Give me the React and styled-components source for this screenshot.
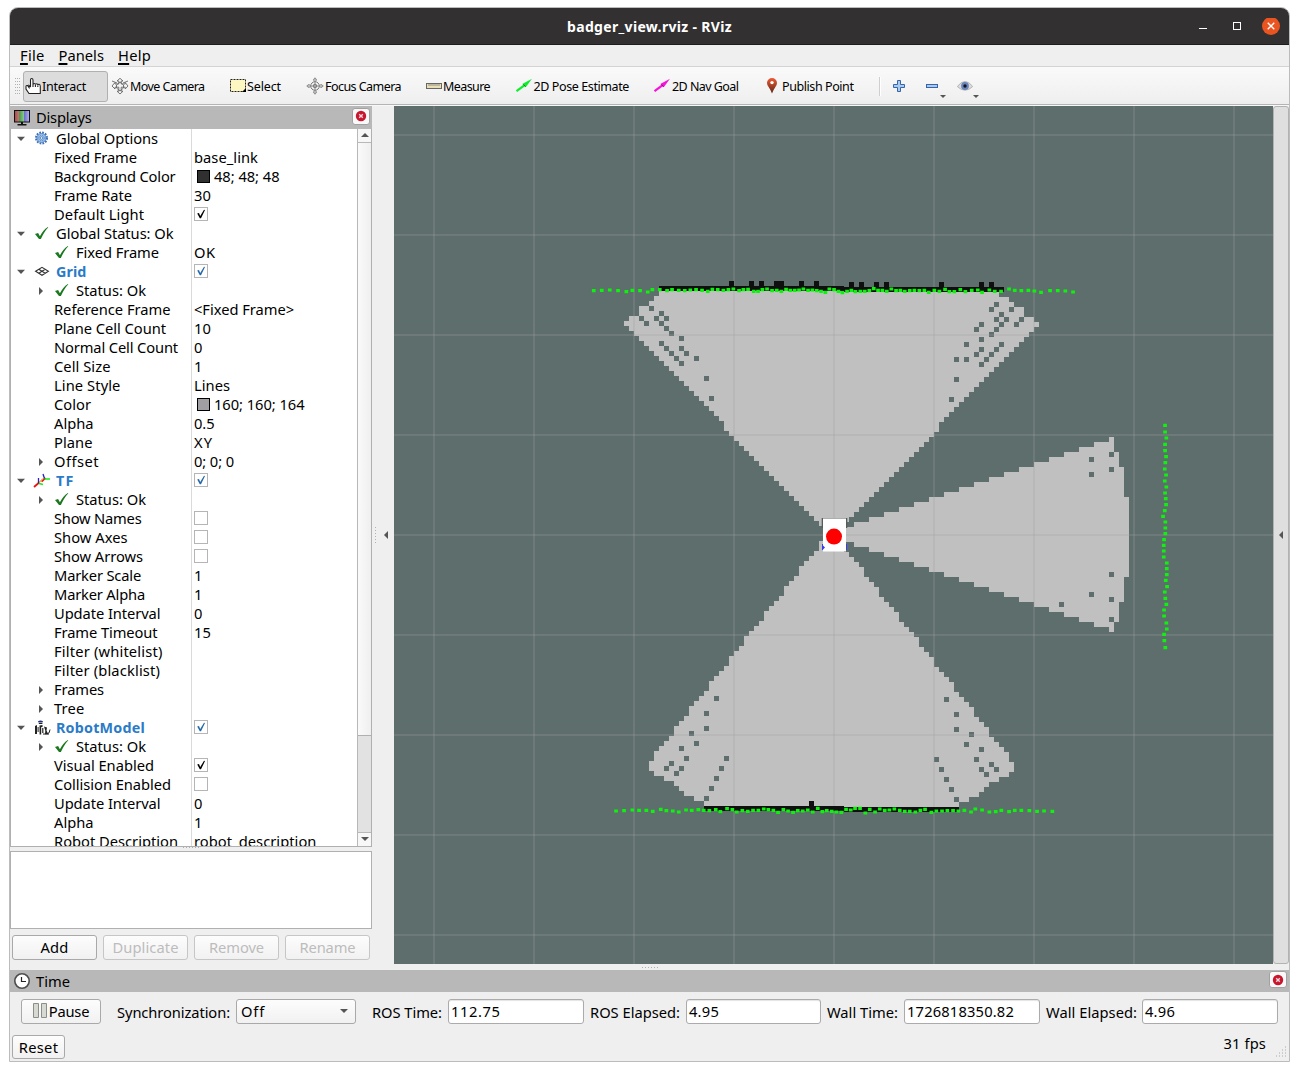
import React, { useLayoutEffect, useRef, useState } from "react";
import styled, { createGlobalStyle, css } from "styled-components";

const GlobalStyle = createGlobalStyle`
  * { box-sizing: border-box; }
  body { margin: 0; background: #fff; }
`;

const FONT = '"Noto Sans", "Open Sans", sans-serif';

/* ---------- text with a fixed advance width ---------- */

const LabelText = styled.span`
  flex: none;
  white-space: pre;
  display: inline-block;
`;

function Label({ w, children, className }) {
  const ref = useRef(null);
  const [spacing, setSpacing] = useState(0);
  useLayoutEffect(() => {
    const el = ref.current;
    const n = el.textContent.length;
    const natural = el.getBoundingClientRect().width - spacing * n;
    setSpacing((w - natural) / n);
  }, [w]);
  return (
    <LabelText ref={ref} className={className} style={{ letterSpacing: spacing }}>
      {children}
    </LabelText>
  );
}

/* ---------- window frame ---------- */

const Desktop = styled.div`
  width: 1299px;
  height: 1071px;
  padding: 7px 9px 9px;
  background: #fff;
  overflow: hidden;
`;

const Window = styled.div`
  width: 1281px;
  height: 1055px;
  border: 1px solid #bcbcbc;
  border-radius: 9px 9px 0 0;
  background: #efefef;
  display: flex;
  flex-direction: column;
  overflow: hidden;
  font-family: ${FONT};
  font-size: 14.7px;
  color: #000;
`;

const TitleBar = styled.header`
  height: 37px;
  flex: none;
  display: grid;
  grid-template-columns: 1fr auto 1fr;
  align-items: center;
  background: #323031;
  border-bottom: 1px solid #1e1d1d;
  color: #fff;
  font-weight: 700;
  font-size: 14px;
`;

const WindowButtons = styled.div`
  justify-self: end;
  display: flex;
  align-items: center;
  padding: 4px 9px 0 0;
`;

const MenuBar = styled.nav`
  height: 22px;
  flex: none;
  display: flex;
  align-items: flex-start;
  gap: 14px;
  padding-left: 10px;
  border-bottom: 1px solid #d3d3d3;
  line-height: 20px;
`;

const Mnemonic = styled.span`
  text-decoration: underline;
  text-decoration-thickness: 1.5px;
  text-underline-offset: 2px;
`;

const ToolBar = styled.div`
  height: 39px;
  flex: none;
  display: flex;
  align-items: center;
  padding-left: 5px;
  background: linear-gradient(#fafafa, #eeeeee);
  border-bottom: 1px solid #f8f8f8;
  box-shadow: inset 0 -1px 0 #b4b4b4;
  font-size: 12.5px;
`;

const Tool = styled.div`
  width: ${(p) => p.$width}px;
  height: 31px;
  flex: none;
  display: flex;
  align-items: center;
  gap: ${(p) => p.$gap}px;
  padding-left: ${(p) => (p.$active ? 1 : 2)}px;
  border: 1px solid transparent;
  ${(p) =>
    p.$active &&
    css`
      background: #dcdcdc;
      border-color: #b0b0b0;
      border-radius: 3px;
      margin-right: 1px;
    `}
`;

const ToolIcon = styled.svg`
  width: 16px;
  height: 16px;
  flex: none;
  overflow: visible;
`;

const Separator = styled.div`
  width: 2px;
  height: 19px;
  margin-right: 12px;
  border-left: 1px solid #cfcfcf;
  border-right: 1px solid #fff;
`;

const MiniTool = styled.div`
  width: ${(p) => p.$width || 33}px;
  height: 30px;
  display: flex;
  align-items: center;
`;

const DropArrow = styled.span`
  width: 0;
  align-self: flex-end;
  margin: 0 0 3px ${(p) => p.$offset}px;
  border: 3px solid transparent;
  border-top-color: #555;
  border-bottom: 0;
`;

/* ---------- workspace ---------- */

const Workspace = styled.main`
  height: 858px;
  flex: none;
  display: flex;
`;

const Dock = styled.aside`
  width: 362px;
  flex: none;
  display: flex;
  flex-direction: column;
`;

const DockHeader = styled.div`
  height: ${(p) => p.$height}px;
  flex: none;
  display: flex;
  align-items: center;
  background: #b8b8b8;
  padding: 0 2px 0 4px;
  gap: 6px;
  line-height: 20px;
`;

const DockTitle = styled.div`
  height: 22px;
`;

const DockIcon = styled.svg`
  width: 16px;
  height: 16px;
  flex: none;
  overflow: visible;
`;

const CloseBox = styled.div`
  width: 18px;
  height: 17px;
  margin: 0 0 3px auto;
  display: flex;
  align-items: center;
  justify-content: center;
  background: #f9f9f9;
  border: 1px solid #a2a2a2;
  border-radius: 3px;
`;

const TreeFrame = styled.div`
  height: 718px;
  flex: none;
  display: flex;
  background: #fff;
  border: 1px solid #b0b0b0;
  border-top: 0;
`;

const TreeBody = styled.div`
  width: 346px;
  height: 717px;
  overflow: hidden;
`;

const TreeRow = styled.div`
  height: 19px;
  display: flex;
  line-height: 19px;
`;

const NameCell = styled.div`
  width: 181px;
  height: 19px;
  flex: none;
  display: flex;
  align-items: center;
  border-right: 1px solid #dadada;
  padding-left: ${(p) => 4 + p.$level * 20}px;
  ${(p) =>
    p.$display &&
    css`
      color: #2a7bc8;
      font-weight: 700;
      font-size: 14.300px;
    `}
`;

const ValueCell = styled.div`
  display: flex;
  align-items: center;
  padding-left: 2px;
`;

const Expander = styled.svg`
  width: 12px;
  height: 12px;
  flex: none;
  margin-right: ${(p) => p.$gap}px;
`;

const RowIcon = styled.svg`
  width: 16px;
  height: 16px;
  flex: none;
  overflow: visible;
  margin-right: 5px;
`;

const CheckFrame = styled.div`
  width: 14px;
  height: 14px;
  margin-bottom: 1px;
  display: flex;
  background: #fff;
  border: 1px solid #b5b5b5;
`;

const Swatch = styled.span`
  width: 13px;
  height: 13px;
  margin: 0 4px 0 3px;
  border: 1px solid #000;
  background: ${(p) => p.$color};
`;

const ScrollBar = styled.div`
  width: 14px;
  flex: none;
  display: flex;
  flex-direction: column;
  border-left: 1px solid #b8b8b8;
  background: #e2e2e2;
`;

const ScrollButton = styled.div`
  height: 14px;
  flex: none;
  display: flex;
  align-items: ${(p) => (p.$down ? "center" : "flex-start")};
  padding-top: ${(p) => (p.$down ? 0 : 2)}px;
  padding-bottom: ${(p) => (p.$down ? 2 : 0)}px;
  justify-content: center;
  background: #f7f7f7;
  border-top: ${(p) => (p.$down ? "1px solid #b8b8b8" : "0")};
  border-bottom: ${(p) => (p.$down ? "0" : "1px solid #b8b8b8")};
`;

const ScrollThumb = styled.div`
  height: 593px;
  background: linear-gradient(90deg, #fafafa, #efefef);
  border-bottom: 1px solid #b0b0b0;
`;

const ScrollSpace = styled.div`
  flex: 1;
`;

const Dots = styled.div`
  width: ${(p) => (p.$vertical ? 1 : 16)}px;
  height: ${(p) => (p.$vertical ? 16 : 1)}px;
  flex: none;
  background: repeating-linear-gradient(
    ${(p) => (p.$vertical ? "180deg" : "90deg")},
    #b0b0b0 0 1px,
    transparent 1px 3px
  );
`;

const Grip = styled.div`
  width: 8px;
  display: flex;
  gap: 1px;
`;

const SplitRow = styled.div`
  height: ${(p) => p.$height}px;
  flex: none;
  display: flex;
  align-items: ${(p) => p.$align || "center"};
  justify-content: center;
`;

const Description = styled.div`
  height: 78px;
  flex: none;
  background: #fff;
  border: 1px solid #b0b0b0;
`;

const ButtonRow = styled.div`
  display: flex;
  gap: 6px;
  padding: 6px 2px 0;
`;

const PushButton = styled.button`
  width: ${(p) => p.$width}px;
  height: ${(p) => p.$height || 25}px;
  flex: none;
  display: flex;
  align-items: center;
  justify-content: center;
  gap: 1px;
  padding: 0 0 ${(p) => p.$lift ?? 2}px;
  font: inherit;
  color: ${(p) => (p.disabled ? "#bcbcbc" : "#000")};
  background: linear-gradient(#fdfdfd, #f1f1f1);
  border: 1px solid ${(p) => (p.disabled ? "#c6c6c6" : "#a9a9a9")};
  border-radius: 3px;
`;

const VerticalSplit = styled.div`
  width: 22px;
  flex: none;
  display: flex;
  align-items: center;
  padding-left: 3px;
  gap: 6px;
`;

const SideHandle = styled.div`
  width: 16px;
  flex: none;
  display: flex;
  align-items: center;
  justify-content: center;
  background: #dfdfdf;
  border: 1px solid #b2b2b2;
  border-radius: 3px;
`;

const Viewport = styled.svg`
  width: 879px;
  height: 858px;
  flex: none;
  display: block;
  background: #5e6e6c;
`;

/* ---------- time panel ---------- */

const TimePanel = styled.footer`
  flex: 1;
  display: flex;
  flex-direction: column;
`;

const TimeRow = styled.div`
  height: 25px;
  margin: 7px 0 0 11px;
  display: flex;
`;

const FieldLabel = styled.div`
  width: ${(p) => p.$width}px;
  flex: none;
  padding-left: ${(p) => p.$pad}px;
  line-height: 27px;
`;

const ComboBox = styled.div`
  width: 120px;
  display: flex;
  align-items: center;
  justify-content: space-between;
  padding: 0 7px 2px 4px;
  background: linear-gradient(#fdfdfd, #f1f1f1);
  border: 1px solid #a9a9a9;
  border-radius: 3px;
`;

const Field = styled.div`
  width: ${(p) => p.$width}px;
  flex: none;
  padding-left: 2px;
  line-height: 22px;
  background: #fff;
  border: 1px solid #ababab;
  border-radius: 3px;
  box-shadow: inset 0 1px 1px #e4e4e4;
`;

const StatusRow = styled.div`
  flex: 1;
  display: flex;
  justify-content: space-between;
  padding: 11px 1px 0 2px;
`;

const FrameRate = styled.div`
  display: flex;
  line-height: 16px;
  gap: 8px;
`;

/* ---------- small drawings ---------- */

const Triangle = ({ dir }) => (
  <svg width="8" height="8" viewBox="0 0 8 8" fill="#555">
    {dir === "down" && <path d="M0 2h8L4 6z" />}
    {dir === "up" && <path d="M0 6h8L4 2z" />}
    {dir === "left" && <path d="M6 0v8L2 4z" />}
  </svg>
);

const CloseGlyph = () => (
  <svg width="12" height="12" viewBox="0 0 12 12">
    <circle cx="6" cy="6" r="5.2" fill="#c9162e" />
    <path d="M4.2 4.2l3.6 3.6M7.8 4.2L4.2 7.8" stroke="#f6d5d9" strokeWidth="1.4" />
  </svg>
);

const CheckMark = ({ color }) => (
  <svg width="12" height="12" viewBox="0 0 12 12">
    <path d="M2.2 5.4L4 5l1.2 3L9 1.8l1 .3L6 10.2H4.8z" fill={color} />
  </svg>
);

const rowIcons = {
  gear: (
    <g transform="translate(6.5 7)">
      <circle r="5.5" fill="none" stroke="#3a70b8" strokeWidth="2" strokeDasharray="1.7 1.18" />
      <circle r="4.5" fill="#a9c6ea" stroke="#3f76bd" strokeWidth=".8" />
      <circle r="2.8" fill="none" stroke="#5489ca" strokeWidth="1" strokeDasharray="1.5 .7" />
      <circle r="1.3" fill="#f2f7fd" stroke="#3f76bd" strokeWidth=".8" />
    </g>
  ),
  ok: <path d="M0 8l3.1-1 1.8 3.2C7 6.2 9.4 3 12.8.9l.5.3C10 4.800 7.700 8.700 5.900 13H4z" fill="#1c781f" />,
  grid: (
    <path
      d="M.6 7.300L7 3.300l6.400 4L7 11.300zM3.800 5.300l6.400 4M10.200 5.300l-6.400 4"
      fill="none"
      stroke="#333"
      strokeWidth="1.100"
    />
  ),
  tf: (
    <g fill="none" strokeWidth="1.300">
      <path d="M-1 14l5.200-4.500M6.500 8.500L10.500 5" stroke="#e11" strokeWidth="1.800" />
      <path d="M4 9.500l4-3.800" stroke="#f1a53c" />
      <path d="M3.500 10V5M9.500 5.500L8 1" stroke="#22c" />
      <path d="M4 10.500l4 1M9.500 6H15" stroke="#1e1" />
    </g>
  ),
  robot: (
    <g fill="#222">
      <path d="M3 1.200Q5.500-.2 8 1.200L7.500 2.500H3.500z" fill="#223082" />
      <path d="M3.800 3h3.600v1H3.800zM0 6l2-1v9H0zM2.600 7h1v5h-1zM4.500 5.500l3-.5v2H6.200v7.500H4.600zM7.200 8h1.200v5H7.200zM9 6.500l3 1-.5 3 1.800 3.800H10l.3-3.500z" />
      <path d="M12.500 13.500q2 .5 2.500-4M8 14h6" stroke="#222" fill="none" />
    </g>
  ),
};

const Check = ({ on, dim }) => (
  <CheckFrame>{on && <CheckMark color={dim ? "#2468a8" : "#000"} />}</CheckFrame>
);

/* ---------- display tree ---------- */

const tree = [
  { level: 0, open: true, icon: "gear", name: "Global Options", w: 102 },
  { level: 1, name: "Fixed Frame", w: 83, value: "base_link", vw: 64 },
  { level: 1, name: "Background Color", w: 121.5, swatch: "#303030", value: "48; 48; 48", vw: 65.5 },
  { level: 1, name: "Frame Rate", w: 78, value: "30", vw: 17 },
  { level: 1, name: "Default Light", w: 90, check: "on" },
  { level: 0, open: true, icon: "ok", name: "Global Status: Ok", w: 117.5 },
  { level: 1, icon: "ok", name: "Fixed Frame", w: 83, value: "OK", vw: 21.5 },
  { level: 0, open: true, icon: "grid", name: "Grid", w: 30.5, display: true, check: "display" },
  { level: 1, open: false, icon: "ok", name: "Status: Ok", w: 70 },
  { level: 1, name: "Reference Frame", w: 116.5, value: "<Fixed Frame>", vw: 100 },
  { level: 1, name: "Plane Cell Count", w: 112, value: "10", vw: 17 },
  { level: 1, name: "Normal Cell Count", w: 124, value: "0", vw: 9 },
  { level: 1, name: "Cell Size", w: 56.5, value: "1", vw: 9 },
  { level: 1, name: "Line Style", w: 66.5, value: "Lines", vw: 36 },
  { level: 1, name: "Color", w: 37, swatch: "#a0a0a4", value: "160; 160; 164", vw: 90.5 },
  { level: 1, name: "Alpha", w: 39.5, value: "0.5", vw: 20.5 },
  { level: 1, name: "Plane", w: 38.5, value: "XY", vw: 19 },
  { level: 1, open: false, name: "Offset", w: 45, value: "0; 0; 0", vw: 40 },
  { level: 0, open: true, icon: "tf", name: "TF", w: 18.5, display: true, check: "display" },
  { level: 1, open: false, icon: "ok", name: "Status: Ok", w: 70 },
  { level: 1, name: "Show Names", w: 87.5, check: "off" },
  { level: 1, name: "Show Axes", w: 73.5, check: "off" },
  { level: 1, name: "Show Arrows", w: 89, check: "off" },
  { level: 1, name: "Marker Scale", w: 87, value: "1", vw: 9 },
  { level: 1, name: "Marker Alpha", w: 91, value: "1", vw: 9 },
  { level: 1, name: "Update Interval", w: 106.5, value: "0", vw: 9 },
  { level: 1, name: "Frame Timeout", w: 103.5, value: "15", vw: 17 },
  { level: 1, name: "Filter (whitelist)", w: 108.5 },
  { level: 1, name: "Filter (blacklist)", w: 106 },
  { level: 1, open: false, name: "Frames", w: 50 },
  { level: 1, open: false, name: "Tree", w: 30.5 },
  { level: 0, open: true, icon: "robot", name: "RobotModel", w: 89, display: true, check: "display" },
  { level: 1, open: false, icon: "ok", name: "Status: Ok", w: 70 },
  { level: 1, name: "Visual Enabled", w: 100, check: "on" },
  { level: 1, name: "Collision Enabled", w: 117, check: "off" },
  { level: 1, name: "Update Interval", w: 106.5, value: "0", vw: 9 },
  { level: 1, name: "Alpha", w: 39.5, value: "1", vw: 9 },
  { level: 1, name: "Robot Description", w: 124, value: "robot_description", vw: 122.5 },
];

function PropertyRow({ item }) {
  return (
    <TreeRow>
      <NameCell $level={item.level} $display={item.display}>
        <Expander viewBox="0 0 12 12" $gap={item.icon ? 8 : 7}>
          {item.open === true && <path d="M2 3.800h8L6 7.900z" fill="#555" />}
          {item.open === false && <path d="M4 2v8l4-4z" fill="#555" />}
        </Expander>
        {item.icon && <RowIcon viewBox="0 0 16 16">{rowIcons[item.icon]}</RowIcon>}
        <Label w={item.w}>{item.name}</Label>
      </NameCell>
      <ValueCell>
        {item.check && <Check on={item.check !== "off"} dim={item.check === "display"} />}
        {item.swatch && <Swatch $color={item.swatch} />}
        {item.value && <Label w={item.vw}>{item.value}</Label>}
      </ValueCell>
    </TreeRow>
  );
}

/* ---------- occupancy map ---------- */

const CELL = 5;
const range = (n, f) => Array.from({ length: n }, (_, i) => f(i));

/* Columns from 2 upward sit one pixel lower than the rest of the map. */
const cellPath = (c0, c1, row) => {
  const part = (a, b, dy) =>
    b > a ? `M${440 + a * CELL} ${185 + row * CELL + dy}h${(b - a) * CELL}v${CELL}h${(a - b) * CELL}z` : "";
  return part(c0, Math.min(c1, 2), 0) + part(Math.max(c0, 2), c1, 1);
};

const topLeft = [-35, -36, -37, -39, -39, -41, -42, ...range(19, (i) => -41 + i), -22, -22, ...range(19, (i) => -21 + i)];
const topRight = [33, 35, 36, 38, 38, 40, 41, ...range(19, (i) => 40 - i), 21, 21, ...range(18, (i) => 20 - i), 2];
const lowLeft = [
  -3, -3, -4, -5, -6, -7, -7, -8, -9, -10, -10, -11, -12, -13, -14, -14, -15, -16, -17, -18, -18, -19, -20, -21, -21,
  -22, -23, -24, -25, -25, -26, -27, -28, -29, -29, -30, -31, -32, -32, -33, -34, -35, -36, -36, -37, -37, -36, -34,
  -32, -31, -30, -28, -26,
];
const lowRight = [
  2, 2, 3, 4, 5, 6, 6, 7, 8, 9, 9, 10, 11, 12, 13, 13, 14, 15, 16, 17, 17, 18, 19, 20, 20, 21, 22, 23, 24, 24, 25, 26,
  27, 28, 28, 29, 30, 31, 31, 32, 33, 34, 35, 35, 36, 36, 35, 33, 31, 30, 29, 27, 25,
];
const sideLeft = [...range(18, (i) => 55 - 3 * i), 2, 2, 2, ...range(18, (i) => 4 + 3 * i)];
const sideRight = [
  56, 56, 56, 57, 57, 57, ...range(6, () => 58), ...range(16, () => 59), ...range(5, () => 58), 57, 57, 57, 57, 56, 56,
];

const freePath = [
  ...topLeft.slice(0, 47).map((c, i) => cellPath(c, topRight[i], i)),
  ...lowLeft.map((c, i) => cellPath(c, lowRight[i], 50 + i)),
  ...sideLeft.map((c, i) => cellPath(c, sideRight[i], 29 + i)),
].join("");

const holes = [
  [-37, 3], [-35, 4], [-39, 5], [-36, 5], [-34, 5], [-38, 6], [-35, 6], [-34, 7], [-33, 8], [-31, 9], [-35, 10],
  [-34, 11], [-31, 11], [-33, 12], [-30, 12], [-32, 13], [-28, 13], [-31, 14], [-26, 17], [-25, 21],
  [32, 2], [31, 3], [35, 3], [33, 4], [32, 5], [34, 5], [37, 5], [29, 6], [33, 6], [36, 6], [28, 7], [32, 7], [31, 8],
  [29, 9], [26, 10], [33, 10], [29, 11], [32, 11], [28, 12], [31, 12], [24, 13], [26, 13], [30, 13], [29, 14],
  [24, 17], [23, 21],
  [55, 32], [51, 33], [55, 35], [51, 36], [55, 56], [51, 60], [55, 61], [45, 62], [55, 65],
  [-24, 81], [-26, 84], [-26, 87], [-29, 88], [-28, 90], [-31, 91], [-30, 93], [-22, 93], [-33, 94], [-34, 95],
  [-31, 95], [-23, 95], [-32, 96], [-24, 97], [-25, 99], [-26, 101],
  [22, 81], [24, 84], [24, 87], [27, 88], [26, 90], [29, 91], [20, 93], [28, 93], [31, 94], [21, 95], [29, 95],
  [32, 95], [30, 96], [22, 97], [23, 99], [24, 101],
];
const holePath = holes.map(([c, r]) => cellPath(c, c + 1, r)).join("");

const wallPath =
  cellPath(-35, 34, -1) +
  cellPath(-26, 25, 103) +
  cellPath(-5, -4, 102) +
  [-21, -17, -15, -12, -11, -7, -4, 3, 5, 8, 10, 21, 29, 31].map((c) => cellPath(c, c + 1, -2)).join("");

/* Laser hits in thirds of a pixel: [origin x, origin y, x, y, x, y, ...]. */
const scans = [
  [186, 164, 41,62,65,61,89,60,114,62,139,65,157,61,180,62,203,66,217,59,239,59,261,62,276,59,296,61,314,62,331,60,348,59,366,61,383,64,397,58,413,59,430,61,445,59,460,57,477,62,490,59,504,58,521,64,534,64,547,59,561,57,576,62,590,61,604,64,618,58,631,61,644,61,657,60,670,57,684,61,697,60,710,62],
  [426, 164, 3,64,16,67,28,57,42,59,55,64,67,68,81,64,94,61,106,65,121,64,134,64,148,62,161,56,174,61,187,61,200,64,214,57,228,62,241,61,254,64,269,62,283,61,298,62,313,61,326,67,343,61,358,64,375,58,388,65,403,65,421,59,436,65,455,61,473,60,486,67,508,60,524,64,543,64,567,57,584,61,604,62,625,61,643,63,663,67,690,62,713,62,736,63,759,66],
  [436, 304, 1005,46,1005,66,1009,84,1005,103,1005,122,1008,140,1006,158,1004,177,1008,195,1004,213,1009,231,1005,249,1007,266,1008,284,1004,302,999,319,1006,336,1006,354,1006,371,1002,389,1001,406,1001,423,1001,441,1010,459,1010,476,1010,494,1007,511,1011,530,1004,546,1006,565,1009,583,1002,600,1002,618,1009,639,1010,657,1002,673,1003,692,1006,713],
  [206, 434, 48,813,72,812,97,810,117,811,139,811,158,814,182,808,199,812,218,813,236,816,258,810,275,811,295,809,311,811,328,812,347,809,361,815,381,806,397,809,410,816,427,812,443,814,459,811,475,811,491,807,505,809,520,811,534,817,550,809,564,813,579,817,593,812,608,813,623,810,638,816,653,805],
  [426, 434, 7,815,20,812,35,814,49,816,64,817,78,808,92,810,105,805,120,805,136,819,149,808,165,816,179,807,194,811,208,810,223,807,239,811,254,814,269,814,286,816,301,811,315,808,334,817,349,813,366,813,382,812,399,812,415,813,433,811,453,816,466,807,486,810,508,816,527,815,544,811,567,815,584,811,604,811,628,812,651,814,672,813,697,814],
];
const hitPath = scans
  .map(([ox, oy, ...pts]) =>
    range(pts.length / 2, (i) => {
      const x = ox + pts[2 * i] / 3 - 1.8;
      const y = oy + pts[2 * i + 1] / 3 - 1.6;
      return `M${x.toFixed(1)} ${y.toFixed(1)}h3.700v3.200h-3.700z`;
    }).join("")
  )
  .join("");

function MapView() {
  return (
    <Viewport viewBox="0 0 879 858">
      <g shapeRendering="crispEdges">
        <path d={freePath} fill="#c0c0c0" />
        <path d={holePath} fill="#5e6e6c" />
        <g fill="rgba(160,160,164,.25)">
          {range(9, (i) => <rect key={i} x={39 + 100 * i} y="0" width="2" height="858" />)}
          {range(9, (i) => <rect key={i} x="0" y={28 + 100 * i} width="879" height="2" />)}
        </g>
        <path d={wallPath} fill="#0e0f0e" />
      </g>
      <path d={hitPath} fill="#0cf40c" />
      <rect x="427.700" y="412" width="25.600" height="10" fill="#555d5b" />
      <rect x="428" y="438" width="25" height="6" fill="#3a3aee" />
      <rect x="429" y="412.500" width="23" height="33" fill="#fff" />
      <path d="M428.500 439l2.500 2.500-2.500 2.500z" fill="#3a3aee" />
      <circle cx="440" cy="430.600" r="8" fill="#f00" />
    </Viewport>
  );
}

/* ---------- toolbar content ---------- */

const crosshair = (
  <g fill="none" stroke="#777">
    <circle cx="8" cy="8" r="4.300" />
    <circle cx="8" cy="8" r="1.800" />
    <path d="M8 0v16M0 8h16M6.700 2.800V1L8-.2 9.300 1v1.800M6.700 13.200V15L8 16.200 9.300 15v-1.800M2.800 6.700H1L-.2 8 1 9.300h1.800M13.200 6.700H15L16.200 8 15 9.300h-1.800" strokeWidth=".8" />
  </g>
);

const arrow = (color) => (
  <g>
    <path d="M.5 13.200L9 6.800" stroke={color} strokeWidth="2.200" />
    <path d="M6.300 6L16 .8 9.700 9.300z" fill={color} />
    <path d="M7.500 6.500l2 2.200" stroke="#222" strokeOpacity=".6" />
  </g>
);

const tools = [
  {
    name: "Interact", w: 44, width: 85, gap: 1, active: true,
    icon: <path d="M5.500 9V2q0-1.500 1.200-1.500T8 2v4.500q0-1 1.200-1t1.200 1.300q0-1 1.200-1t1.200 1.300q.2-1 1.300-.9T15.300 8.400V15.500H4L1 11V8.500q0-1.200 1.500-1L4 9.500V7.500L5.500 9M8 6.500V9M10.400 7v2M12.800 7.500V9" fill="#fff" stroke="#222" strokeWidth="1.100" />,
  },
  {
    name: "Move Camera", w: 74.5, width: 118, gap: 2,
    icon: (
      <g fill="#f4f4f4" stroke="#666" strokeWidth=".9">
        <path d="M8 .3l3 2.700H9.200v3h4V4.500L16 8l-2.800 3V9.200H9.200v4H11L8 16l-3-2.800h1.800v-4H3V11L0 8l3-3.500V6h3.800V3H5z" />
        <path d="M0 3l5 2M16 3l-5 2M4.500 7l3.500-3 3.500 3v3L8 13l-3.500-3z" fill="none" />
      </g>
    ),
  },
  {
    name: "Select", w: 34, width: 77, gap: 1,
    icon: (
      <g>
        <rect x=".5" y="1.500" width="15" height="12" fill="#fdf8c1" stroke="#222" strokeDasharray="2 1" />
        <path d="M16 10v4h-4z" />
      </g>
    ),
  },
  { name: "Focus Camera", w: 76, width: 119, gap: 2, icon: crosshair },
  {
    name: "Measure", w: 47, width: 90, gap: 1,
    icon: (
      <g>
        <rect x=".5" y="5.500" width="15" height="5" fill="#e8dfb6" stroke="#666" />
        <path d="M3 6v2M5 6v2M7 6v2M9 6v2M11 6v2M13 6v2" stroke="#777" strokeWidth=".8" />
      </g>
    ),
  },
  { name: "2D Pose Estimate", w: 95.5, width: 138, gap: 1.5, icon: arrow("#0bef2b") },
  { name: "2D Nav Goal", w: 66.5, width: 110, gap: 2, icon: arrow("#f712dc") },
  {
    name: "Publish Point", w: 71.5, width: 118, gap: 2,
    icon: (
      <g>
        <defs>
          <linearGradient id="pin" x1="0" y1="0" x2="0" y2="1">
            <stop offset="0" stopColor="#ee5a34" />
            <stop offset="1" stopColor="#5d2616" />
          </linearGradient>
        </defs>
        <path d="M8 15.500Q7 12.500 4.600 9 3 6.800 3 5a5 5 0 0 1 10 0q0 1.800-1.600 4Q9 12.500 8 15.500z" fill="url(#pin)" />
        <circle cx="8" cy="4.600" r="1.700" fill="#fff" />
      </g>
    ),
  },
];

const fields = [
  { label: "ROS Time:", pad: 16, width: 92, w: 70, value: "112.75", vw: 49.5, box: 136 },
  { label: "ROS Elapsed:", pad: 6, width: 102, w: 90, value: "4.95", vw: 30, box: 135 },
  { label: "Wall Time:", pad: 6, width: 83, w: 71, value: "1726818350.82", vw: 107, box: 136 },
  { label: "Wall Elapsed:", pad: 6, width: 102, w: 91, value: "4.96", vw: 30, box: 136 },
];

const panelButtons = [
  { name: "Add", w: 28, enabled: true },
  { name: "Duplicate", w: 66 },
  { name: "Remove", w: 55 },
  { name: "Rename", w: 56 },
];

export default function App() {
  return (
    <Desktop>
      <GlobalStyle />
      <Window>
        <TitleBar>
          <span />
          <Label w={165}>badger_view.rviz - RViz</Label>
          <WindowButtons>
            <svg width="84" height="20" viewBox="0 0 84 20">
              <path d="M3 10.500h8" stroke="#fff" />
              <rect x="37.500" y="4.500" width="7" height="7" fill="none" stroke="#fff" />
              <circle cx="75" cy="8" r="9" fill="#e95420" />
              <path d="M71.700 4.700l6.600 6.600M78.300 4.700l-6.600 6.600" stroke="#fff" strokeWidth="1.300" />
            </svg>
          </WindowButtons>
        </TitleBar>
        <MenuBar>
          <Label w={24.5}><Mnemonic>F</Mnemonic>ile</Label>
          <Label w={45.5}><Mnemonic>P</Mnemonic>anels</Label>
          <Label w={33}><Mnemonic>H</Mnemonic>elp</Label>
        </MenuBar>
        <ToolBar>
          <Grip>
            <Dots $vertical />
            <Dots $vertical />
            <Dots $vertical />
          </Grip>
          {tools.map((t) => (
            <Tool key={t.name} $width={t.width} $gap={t.gap} $active={t.active}>
              <ToolIcon viewBox="0 0 16 16">{t.icon}</ToolIcon>
              <Label w={t.w}>{t.name}</Label>
            </Tool>
          ))}
          <Separator />
          <MiniTool>
            <svg width="12" height="12" viewBox="0 0 12 12">
              <path d="M4.500.5h3v4h4v3h-4v4h-3v-4h-4v-3h4z" fill="#a9c9ee" stroke="#3565a8" />
            </svg>
          </MiniTool>
          <MiniTool $width={31}>
            <svg width="12" height="12" viewBox="0 0 12 12">
              <rect x=".5" y="4.500" width="11" height="3" fill="#a9c9ee" stroke="#3565a8" />
            </svg>
            <DropArrow $offset={2} />
          </MiniTool>
          <MiniTool>
            <svg width="16" height="12" viewBox="0 0 16 12">
              <path d="M.3 6.500Q8-3.500 15.700 6.500 8 14 .3 6.500z" fill="#dcdcdc" stroke="#aaa" strokeWidth=".8" />
              <circle cx="8" cy="6" r="3.900" fill="#6a83bd" />
              <circle cx="8" cy="6" r="1.700" fill="#10131c" />
            </svg>
            <DropArrow $offset={0} />
          </MiniTool>
        </ToolBar>

        <Workspace>
          <Dock>
            <DockHeader $height={23}>
              <DockIcon viewBox="0 0 16 16">
                <defs>
                  <linearGradient id="screen">
                    <stop offset="0" stopColor="#a54848" />
                    <stop offset=".33" stopColor="#c97a7a" />
                    <stop offset=".33" stopColor="#4b9a50" />
                    <stop offset=".66" stopColor="#8fd08f" />
                    <stop offset=".66" stopColor="#6f6fc8" />
                    <stop offset="1" stopColor="#b5b5ee" />
                  </linearGradient>
                </defs>
                <rect x=".5" y=".5" width="15" height="11.500" fill="url(#screen)" stroke="#111" />
                <path d="M7 12h2v2h3.500v1.500h-9V14H7z" fill="#111" />
              </DockIcon>
              <DockTitle><Label w={55.5}>Displays</Label></DockTitle>
              <CloseBox><CloseGlyph /></CloseBox>
            </DockHeader>
            <TreeFrame>
              <TreeBody>
                {tree.map((item, i) => <PropertyRow key={i} item={item} />)}
              </TreeBody>
              <ScrollBar>
                <ScrollButton><Triangle dir="up" /></ScrollButton>
                <ScrollThumb />
                <ScrollSpace />
                <ScrollButton $down><Triangle dir="down" /></ScrollButton>
              </ScrollBar>
            </TreeFrame>
            <SplitRow $height={4} $align="flex-start"><Dots /></SplitRow>
            <Description />
            <ButtonRow>
              {panelButtons.map((b) => (
                <PushButton key={b.name} $width={85} disabled={!b.enabled}>
                  <Label w={b.w}>{b.name}</Label>
                </PushButton>
              ))}
            </ButtonRow>
          </Dock>
          <VerticalSplit>
            <Dots $vertical />
            <Triangle dir="left" />
          </VerticalSplit>
          <MapView />
          <SideHandle><Triangle dir="left" /></SideHandle>
        </Workspace>

        <SplitRow $height={6}><Dots /></SplitRow>
        <TimePanel>
          <DockHeader $height={22}>
            <DockIcon viewBox="0 0 16 16">
              <circle cx="8" cy="8" r="7.200" fill="#fff" stroke="#4d4d4d" strokeWidth="1.600" />
              <path d="M7.500 4v4.500H12" fill="none" stroke="#222" strokeWidth="1.200" />
            </DockIcon>
            <Label w={34}>Time</Label>
            <CloseBox><CloseGlyph /></CloseBox>
          </DockHeader>
          <TimeRow>
            <PushButton $width={80}>
              <svg width="15" height="15" viewBox="0 0 15 15">
                <path d="M.5.500h5v14h-5zM8.500.500h5v14h-5z" fill="#d5dad3" stroke="#8b8f88" />
              </svg>
              <Label w={40.5}>Pause</Label>
            </PushButton>
            <FieldLabel $width={135} $pad={16}><Label w={113}>Synchronization:</Label></FieldLabel>
            <ComboBox>
              <Label w={24}>Off</Label>
              <Triangle dir="down" />
            </ComboBox>
            {fields.map((f) => (
              <React.Fragment key={f.label}>
                <FieldLabel $width={f.width} $pad={f.pad}><Label w={f.w}>{f.label}</Label></FieldLabel>
                <Field $width={f.box}><Label w={f.vw}>{f.value}</Label></Field>
              </React.Fragment>
            ))}
          </TimeRow>
          <StatusRow>
            <PushButton $width={53} $height={24} $lift={0}><Label w={39.5}>Reset</Label></PushButton>
            <FrameRate>
              <Label w={42.5}>31 fps</Label>
              <svg width="14" height="26" viewBox="0 0 14 26">
                <path d="M11 12h1M8 15h1M11 15h1M5 18h1M8 18h1M11 18h1M2 21h1M5 21h1M8 21h1M11 21h1" stroke="#aaa" />
              </svg>
            </FrameRate>
          </StatusRow>
        </TimePanel>
      </Window>
    </Desktop>
  );
}
